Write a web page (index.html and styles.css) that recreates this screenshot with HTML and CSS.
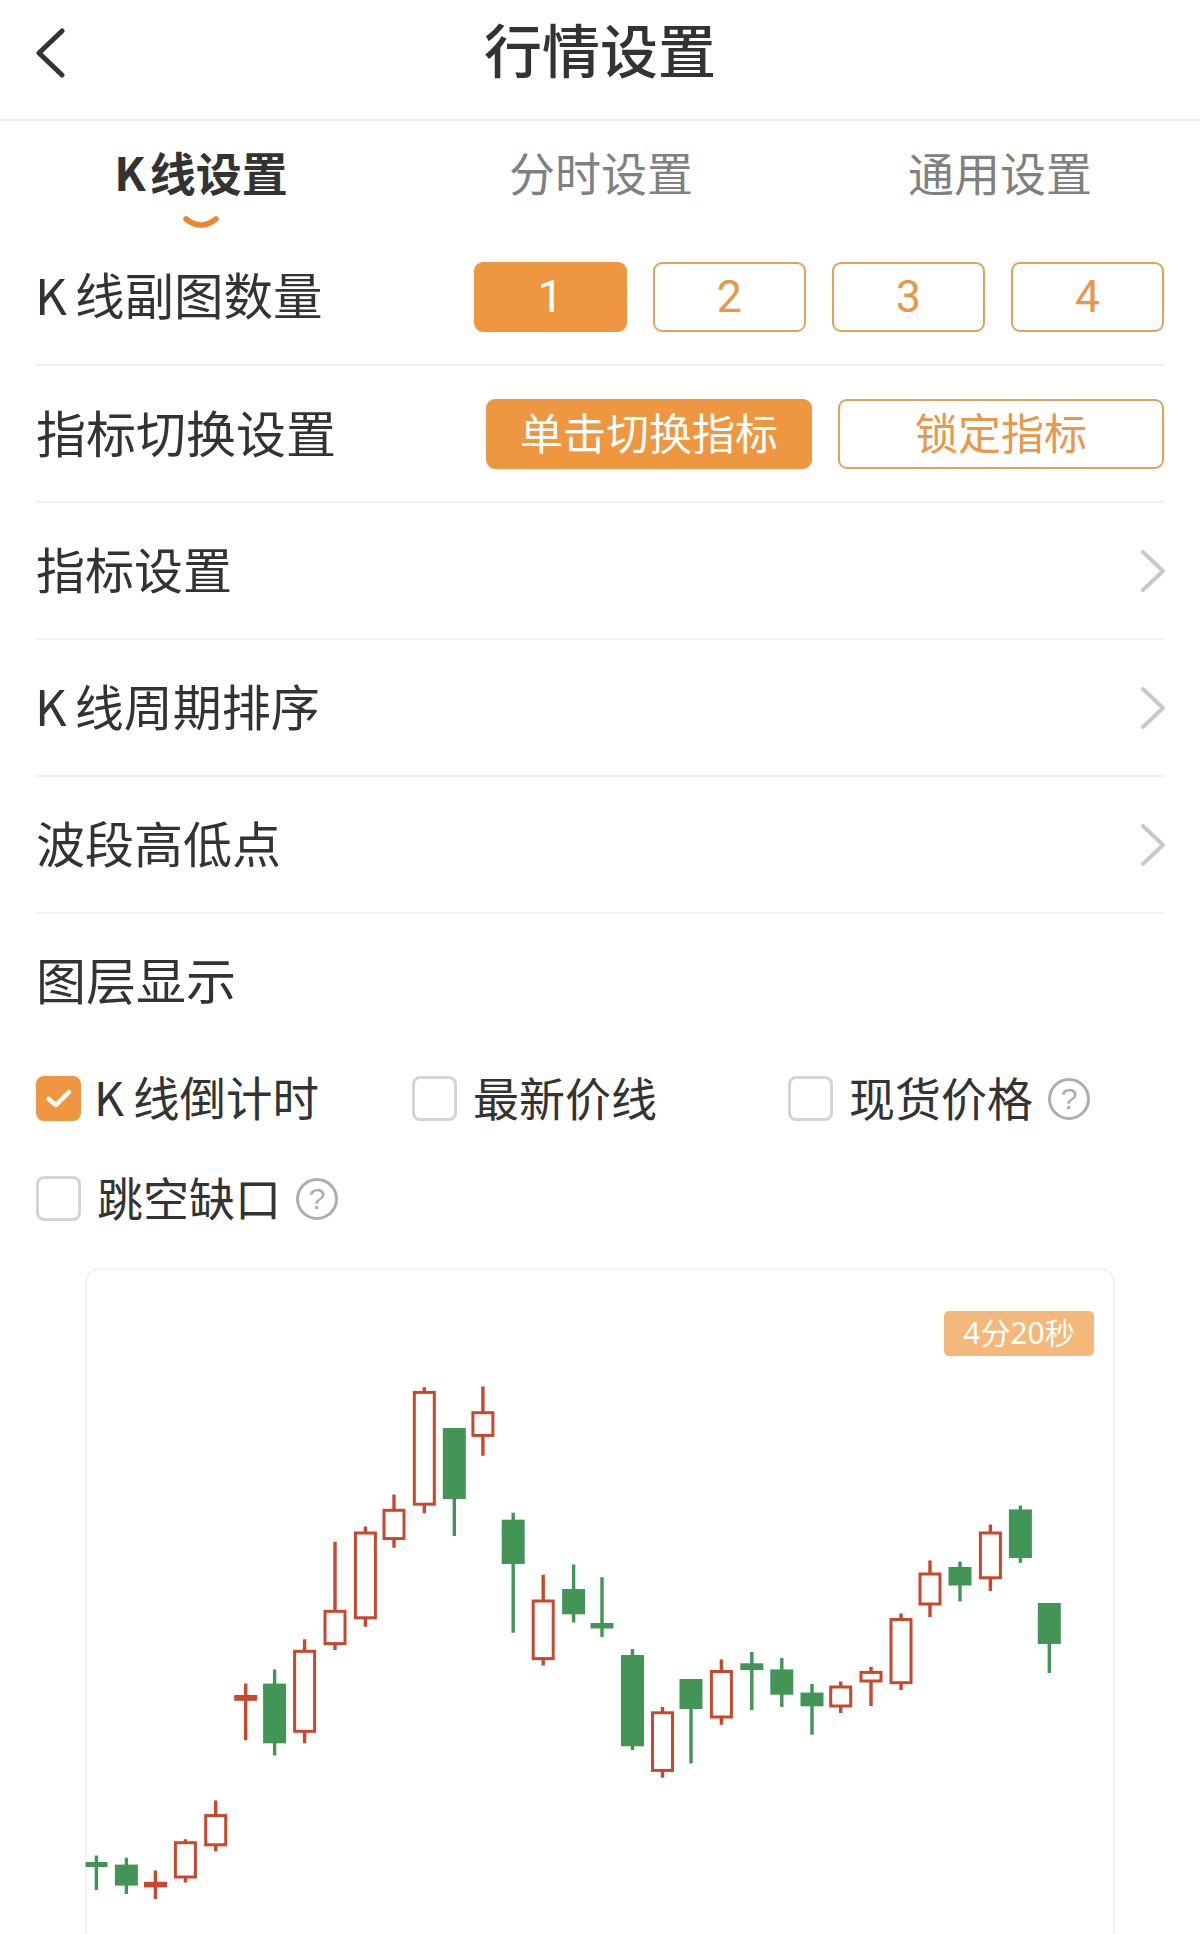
FILE: index.html
```html
<!DOCTYPE html>
<html lang="zh-CN">
<head>
<meta charset="utf-8">
<title>行情设置</title>
<link rel="stylesheet" href="styles.css">
</head>
<body>
<div class="page">
  <header class="header">
    <svg class="back" width="30" height="50" viewBox="0 0 30 50"><path d="M26 3 L3 25 L26 47"/></svg>
    <h1 class="title">行情设置</h1>
  </header>
  <nav class="tabs">
    <div class="tab active"><span><span class="tab-k">K</span>线设置</span>
      <svg class="smile" width="36" height="14" viewBox="0 0 36 14"><path d="M3 3 Q18 15 33 3"/></svg>
    </div>
    <div class="tab">分时设置</div>
    <div class="tab">通用设置</div>
  </nav>
  <section class="row">
    <div class="label large"><span class="k">K</span>线副图数量</div>
    <div class="choices">
      <div class="choice small on">1</div>
      <div class="choice small">2</div>
      <div class="choice small">3</div>
      <div class="choice small">4</div>
    </div>
  </section>
  <section class="row">
    <div class="label larger">指标切换设置</div>
    <div class="choices">
      <div class="choice wide on">单击切换指标</div>
      <div class="choice wide">锁定指标</div>
    </div>
  </section>
  <section class="row">
    <div class="label">指标设置</div>
    <svg class="chev" width="26" height="42" viewBox="0 0 26 42"><path d="M4 2 L24 21 L4 40"/></svg>
  </section>
  <section class="row">
    <div class="label"><span class="k">K</span>线周期排序</div>
    <svg class="chev" width="26" height="42" viewBox="0 0 26 42"><path d="M4 2 L24 21 L4 40"/></svg>
  </section>
  <section class="row">
    <div class="label">波段高低点</div>
    <svg class="chev" width="26" height="42" viewBox="0 0 26 42"><path d="M4 2 L24 21 L4 40"/></svg>
  </section>
  <section class="row last">
    <div class="label larger">图层显示</div>
  </section>
  <div class="checks">
    <div class="check">
      <span class="box on"><svg width="45" height="45" viewBox="0 0 45 45"><path d="M12.5 23 L20 29 L33 16"/></svg></span>
      <span class="check-text wide-text"><span class="small-k">K</span>线倒计时</span>
    </div>
    <div class="check"><span class="box"></span><span class="check-text">最新价线</span></div>
    <div class="check"><span class="box"></span><span class="check-text">现货价格</span><span class="help">?</span></div>
    <div class="check"><span class="box"></span><span class="check-text">跳空缺口</span><span class="help">?</span></div>
  </div>
  <div class="card">
    <div class="badge">4分20秒</div>
    <svg class="chart" width="1028" height="666" viewBox="85 1268 1028 666">
      <g class="down">
        <path class="wick" d="M96.4 1855.5V1890M126.4 1857.7V1894M274.6 1669.4V1755.4M454.3 1428V1536M513.2 1512.8V1632.8M573.6 1564.4V1622.5M602 1577.3V1637M632.5 1649V1750M691 1679V1763.5M751.8 1652V1710M781.8 1658V1707M812 1684V1734.7M960 1561.4V1601.4M1020.4 1505.5V1562.7M1049.3 1603V1673"/>
        <rect x="85.5" y="1862" width="22" height="5"/>
        <rect x="114.9" y="1864.6" width="23" height="21"/>
        <rect x="263.1" y="1683.6" width="23" height="59.7"/>
        <rect x="442.8" y="1428" width="23" height="71"/>
        <rect x="501.7" y="1519.7" width="23" height="44.3"/>
        <rect x="562.1" y="1589" width="23" height="25.3"/>
        <rect x="590.5" y="1623" width="23" height="5.5"/>
        <rect x="621" y="1655" width="23" height="91.3"/>
        <rect x="679.5" y="1679" width="23" height="30"/>
        <rect x="740.3" y="1663.3" width="23" height="6.7"/>
        <rect x="770.3" y="1669.4" width="23" height="25.3"/>
        <rect x="800.5" y="1692.6" width="23" height="13.7"/>
        <rect x="948.5" y="1567" width="23" height="18.5"/>
        <rect x="1008.9" y="1509.4" width="23" height="48.6"/>
        <rect x="1037.8" y="1603" width="23" height="41"/>
      </g>
      <g class="up">
        <path class="wick" d="M155.4 1870.6V1899M185.4 1839.2V1882.6M215.7 1800.5V1851M245.7 1683.6V1740.3M304.6 1639.3V1743.3M335 1541.7V1650M365.4 1526.6V1626.8M394 1494.4V1547.7M424.3 1387.3V1513.3M482.9 1386.4V1455.7M543.2 1574.8V1665.5M662.5 1707V1777.7M721.4 1659.5V1724.8M840.7 1681.4V1713M871 1666.8V1706M901 1613.5V1690M930 1560.6V1617M990.4 1524.5V1591"/>
        <rect class="solid" x="144" y="1881.8" width="23" height="5.6"/>
        <rect class="solid" x="234.2" y="1695" width="23" height="5.8"/>
        <rect x="175.4" y="1842.7" width="20" height="34.3"/>
        <rect x="205.7" y="1815.6" width="20" height="29.2"/>
        <rect x="294.6" y="1651.3" width="20" height="80"/>
        <rect x="325" y="1611.3" width="20" height="32.3"/>
        <rect x="355.4" y="1533" width="20" height="84.8"/>
        <rect x="384" y="1510.3" width="20" height="28.3"/>
        <rect x="414.3" y="1392.4" width="20" height="111.8"/>
        <rect x="472.9" y="1412.7" width="20" height="22.7"/>
        <rect x="533.2" y="1601" width="20" height="57.6"/>
        <rect x="652.5" y="1712.8" width="20" height="57.6"/>
        <rect x="711.4" y="1671.5" width="20" height="45.5"/>
        <rect x="830.7" y="1687" width="20" height="19"/>
        <rect x="861" y="1672.4" width="20" height="8.6"/>
        <rect x="891" y="1619.5" width="20" height="63.2"/>
        <rect x="920" y="1574" width="20" height="30"/>
        <rect x="980.4" y="1533" width="20" height="44.8"/>
      </g>
    </svg>
  </div>
</div>
</body>
</html>
```
FILE: styles.css
```css
* { box-sizing: border-box; }
html, body { margin: 0; padding: 0; background: #fff; }
body {
  font-family: "Noto Sans CJK SC", "Noto Sans", sans-serif;
  color: #333;
}
.page {
  width: 1200px;
  height: 1934px;
  overflow: hidden;
  background: #fff;
}
.header {
  position: relative;
  height: 121px;
  padding-bottom: 23px;
  border-bottom: 2px solid #eeeeee;
  display: flex;
  align-items: center;
  justify-content: center;
}
.back {
  position: absolute;
  left: 36px;
  top: 28px;
}
.back path {
  fill: none;
  stroke: #333;
  stroke-width: 5;
  stroke-linecap: round;
  stroke-linejoin: round;
}
.title {
  margin: 0;
  font-size: 58px;
  font-weight: 500;
  line-height: 70px;
  color: #333;
}
.tabs {
  height: 108px;
  display: grid;
  grid-template-columns: 402px 398px 400px;
  padding-top: 20px;
}
.tab {
  display: flex;
  flex-direction: column;
  align-items: center;
  font-size: 46px;
  line-height: 60px;
  color: #808080;
}
.tab.active {
  font-weight: 700;
  color: #333;
}
.tab-k { margin-right: 4px; }
.smile { margin-top: 15px; }
.smile path {
  fill: none;
  stroke: #ea8630;
  stroke-width: 5.5;
  stroke-linecap: round;
}
.row {
  height: 137px;
  margin: 0 36px;
  border-bottom: 2px solid #f1f1f1;
  display: flex;
  align-items: center;
  justify-content: space-between;
}
.row.last {
  height: 136px;
  border-bottom: 0;
}
.row.last .label { padding-bottom: 8px; }
.label {
  padding-bottom: 5px;
  font-size: 49px;
  line-height: 64px;
  color: #333;
}
.label.large { font-size: 49.5px; }
.label.larger { font-size: 50px; }
.k {
  margin-left: -1px;
  margin-right: 8px;
}
.choices {
  display: flex;
  gap: 26px;
}
.choice {
  height: 70px;
  border: 2px solid #e5a05a;
  border-radius: 9px;
  background: #fff;
  color: #e9974a;
  display: flex;
  align-items: center;
  justify-content: center;
}
.choice.on {
  background: #ee9740;
  border-color: #ee9740;
  color: #fff;
}
.choice.small {
  width: 153px;
  font-family: Roboto, sans-serif;
  font-size: 45px;
}
.choice.wide {
  width: 326px;
  padding-bottom: 6px;
  font-size: 43px;
}
.chev { margin-right: -1px; }
.chev path {
  fill: none;
  stroke: #c9c9c9;
  stroke-width: 4;
  stroke-linecap: round;
  stroke-linejoin: round;
}
.checks {
  display: grid;
  grid-template-columns: 376px 376px 376px;
  row-gap: 55px;
  padding: 26px 0 0 36px;
}
.check {
  height: 45px;
  display: flex;
  align-items: center;
}
.box {
  width: 45px;
  height: 45px;
  flex: none;
  border: 3px solid #d4d4d4;
  border-radius: 8px;
  margin-right: 16px;
  background: #fff;
}
.box.on {
  border: 0;
  background: #ee9740;
}
.box svg { display: block; }
.box path {
  fill: none;
  stroke: #fff;
  stroke-width: 4.5;
  stroke-linecap: round;
  stroke-linejoin: round;
}
.check-text {
  padding-bottom: 5px;
  font-size: 46px;
  line-height: 60px;
  color: #333;
}
.check-text.wide-text { font-size: 46.5px; }
.small-k {
  margin-left: -3px;
  margin-right: 9px;
}
.help {
  width: 42px;
  height: 42px;
  margin-left: 15px;
  flex: none;
  border: 3.5px solid #adadad;
  border-radius: 50%;
  color: #adadad;
  font-family: "Liberation Sans", sans-serif;
  font-size: 30px;
  line-height: 35px;
  text-align: center;
}
.card {
  position: relative;
  width: 1030px;
  height: 720px;
  margin: 47px 0 0 85px;
  border: 2px solid #f3f3f3;
  border-radius: 14px;
}
.badge {
  position: absolute;
  top: 41px;
  right: 19px;
  width: 150px;
  height: 45px;
  border-radius: 5px;
  background: #f4b87a;
  color: #fff;
  font-family: "Noto Sans", "Noto Sans CJK SC", sans-serif;
  font-size: 30px;
  line-height: 43px;
  text-align: center;
}
.chart {
  display: block;
  margin: -2px 0 0 -2px;
}
.wick {
  fill: none;
  stroke-width: 3.4;
}
.down .wick { stroke: #439556; }
.down rect { fill: #439556; }
.up .wick { stroke: #c8472f; }
.up rect {
  fill: #fff;
  stroke: #c8472f;
  stroke-width: 3;
}
.up rect.solid {
  fill: #c8472f;
  stroke: none;
}
```
